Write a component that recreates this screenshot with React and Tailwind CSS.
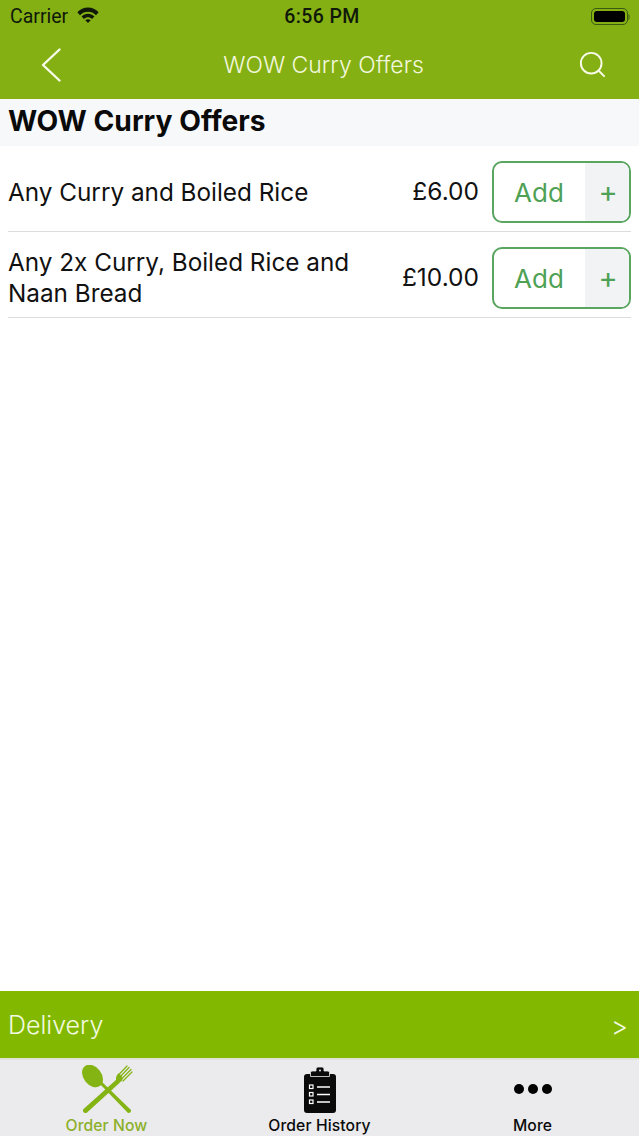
import { Search } from "lucide-react";

const items = [
  { name: "Any Curry and Boiled Rice", price: "£6.00" },
  { name: "Any 2x Curry, Boiled Rice and Naan Bread", price: "£10.00" },
];

function OfferRow({ item }) {
  return (
    <div className="mx-2 flex items-center justify-between border-b border-[#dcdcdc] pb-[8px] pt-[15px]">
      <div className="w-[375px] text-[24.3px] leading-[31px] text-[#111]">{item.name}</div>
      <div className="flex items-center">
        <span className="mr-[13px] pb-[2px] text-[24.5px] text-[#111]">{item.price}</span>
        <div className="flex h-[62px] w-[139px] overflow-hidden rounded-[10px] border-2 border-[#5aa55f]">
          <span className="flex flex-1 items-center justify-center pr-px text-[26px] text-[#4fa155]">Add</span>
          <span className="flex w-[44px] items-center justify-center bg-[#f1f3f5] pl-[2px] text-[29px] text-[#4fa155]">+</span>
        </div>
      </div>
    </div>
  );
}

function SpoonFork() {
  return (
    <svg width="52" height="50" viewBox="0 0 52 50" fill="none" className="mb-px">
      <ellipse cx="11.500" cy="11" rx="9" ry="12.500" transform="rotate(-38 11.500 11)" fill="#84b414" />
      <path d="M17 17 L19.500 15.500 L50 45 Q50.500 48 47 48 Z" fill="#84b414" />
      <path d="M36 14 L39 17.500 L5.500 48 Q1.500 48.500 2 44.500 Z" fill="#84b414" />
      <path d="M35 15 C34.500 11.500 36 10 38 8 L42 13 L41 15.500 C39.500 18 37 17.500 35 15 Z" fill="#84b414" />
      <path d="M36.500 11 L46 1 M38.500 12.500 L48 2.500 M40.500 14 L50 4.500 M42 16 L51 7" stroke="#84b414" strokeWidth="1.200" strokeLinecap="round" />
    </svg>
  );
}

function Clipboard() {
  return (
    <svg width="32" height="46" viewBox="0 0 32 46" className="mb-[3px]">
      <path d="M3 7 H29 Q32 7 32 10 V43 Q32 46 29 46 H3 Q0 46 0 43 V10 Q0 7 3 7 Z" fill="#0a0a0a" />
      <path d="M12 4 V2 Q12 0 14 0 H18 Q20 0 20 2 V4 H24 Q25.500 4 25.500 5.500 V9.500 H6.500 V5.500 Q6.500 4 8 4 Z" fill="#0a0a0a" stroke="#ebeaec" strokeWidth="0.800" />
      <circle cx="16" cy="3.500" r="1" fill="#ebeaec" />
      <rect x="5.500" y="18" width="3.500" height="3.500" fill="none" stroke="#fff" strokeWidth="1.200" />
      <rect x="5.500" y="25.500" width="3.500" height="3.500" fill="none" stroke="#fff" strokeWidth="1.200" />
      <rect x="5.500" y="33" width="3.500" height="3.500" fill="none" stroke="#fff" strokeWidth="1.200" />
      <path d="M13 20H26M13 27.500H26M13 35H26" stroke="#fff" strokeWidth="1.500" />
    </svg>
  );
}

export default function App() {
  return (
    <div className="flex h-[1136px] w-[639px] flex-col overflow-hidden bg-white font-['Inter',sans-serif]">
      <div className="flex h-[99px] flex-col bg-[#84b014]">
        <div className="flex h-[33px] items-center justify-between pl-[10px] pr-[9px] text-[#10180a]">
          <div className="flex w-[200px] items-center gap-[9px] font-['Roboto',sans-serif] text-[19.5px]">
            <span>Carrier</span>
            <svg width="22" height="16" viewBox="0 0 20 15" className="-mt-[3px]">
              <path d="M0 5 C5 -1 15 -1 20 5 L17.500 7.700 C13.500 3.500 6.500 3.500 2.500 7.700 Z" fill="#10180a" />
              <path d="M4 9 C7.500 5.500 12.500 5.500 16 9 L13.800 11.300 C11.500 9.200 8.500 9.200 6.200 11.300 Z" fill="#10180a" />
              <path d="M7.500 12.500 C9 11 11 11 12.500 12.500 L10 15 Z" fill="#10180a" />
            </svg>
          </div>
          <span className="ml-[4px] font-['Roboto',sans-serif] text-[19.5px] font-medium tracking-[0.4px]">6:56 PM</span>
          <div className="flex w-[200px] items-center justify-end">
            <div className="h-[17px] w-[37px] rounded-[5px] border border-[#3c5a10] p-[2px]">
              <div className="h-full w-full rounded-[3px] bg-black" />
            </div>
            <div className="h-[6px] w-[2px] rounded-r-sm bg-[#5f8212]" />
          </div>
        </div>
        <div className="flex flex-1 items-center justify-between pb-[2px] pl-[41px] pr-[31px]">
          <svg width="20" height="34" viewBox="0 0 20 34" fill="none">
            <path d="M18.500 1.500 L2 17 L18.500 32.500" stroke="#f7fbe8" strokeWidth="2.400" strokeLinecap="round" strokeLinejoin="round" />
          </svg>
          <span className="ml-[9px] text-[23px] font-light text-[#f2f7dc]">WOW Curry Offers</span>
          <Search size={31} strokeWidth={1.5} color="#f7fbe8" className="-mt-[2px]" />
        </div>
      </div>

      <div className="flex h-[47px] items-center bg-[#f7f8fa] pb-[2px] pl-2 text-[28.2px] font-bold text-[#0a0a0a]">WOW Curry Offers</div>

      <div className="flex-1">
        {items.map((item) => (
          <OfferRow key={item.name} item={item} />
        ))}
      </div>

      <div className="flex h-[67px] items-center justify-between bg-[#82b900] pl-2 pr-[11px] pt-[3px] text-[#f3f9e0]">
        <span className="text-[25px] font-light">Delivery</span>
        <span className="text-[26px] font-light">&gt;</span>
      </div>

      <div className="grid h-[78px] grid-cols-3 border-t-2 border-[#dfe3d8] bg-[#ebeaec] text-[15.7px] font-medium tracking-[0.1px]">
        <div className="flex flex-col items-center justify-end text-[#8bb02a]">
          <SpoonFork />
          <span className="leading-[20px]">Order Now</span>
        </div>
        <div className="flex flex-col items-center justify-end text-[#0a0a0a]">
          <Clipboard />
          <span className="leading-[20px]">Order History</span>
        </div>
        <div className="flex flex-col items-center justify-end text-[#0a0a0a]">
          <div className="mb-[22px] flex gap-[4px]">
            <span className="h-[10px] w-[10px] rounded-full bg-black" />
            <span className="h-[10px] w-[10px] rounded-full bg-black" />
            <span className="h-[10px] w-[10px] rounded-full bg-black" />
          </div>
          <span className="leading-[20px]">More</span>
        </div>
      </div>
    </div>
  );
}
